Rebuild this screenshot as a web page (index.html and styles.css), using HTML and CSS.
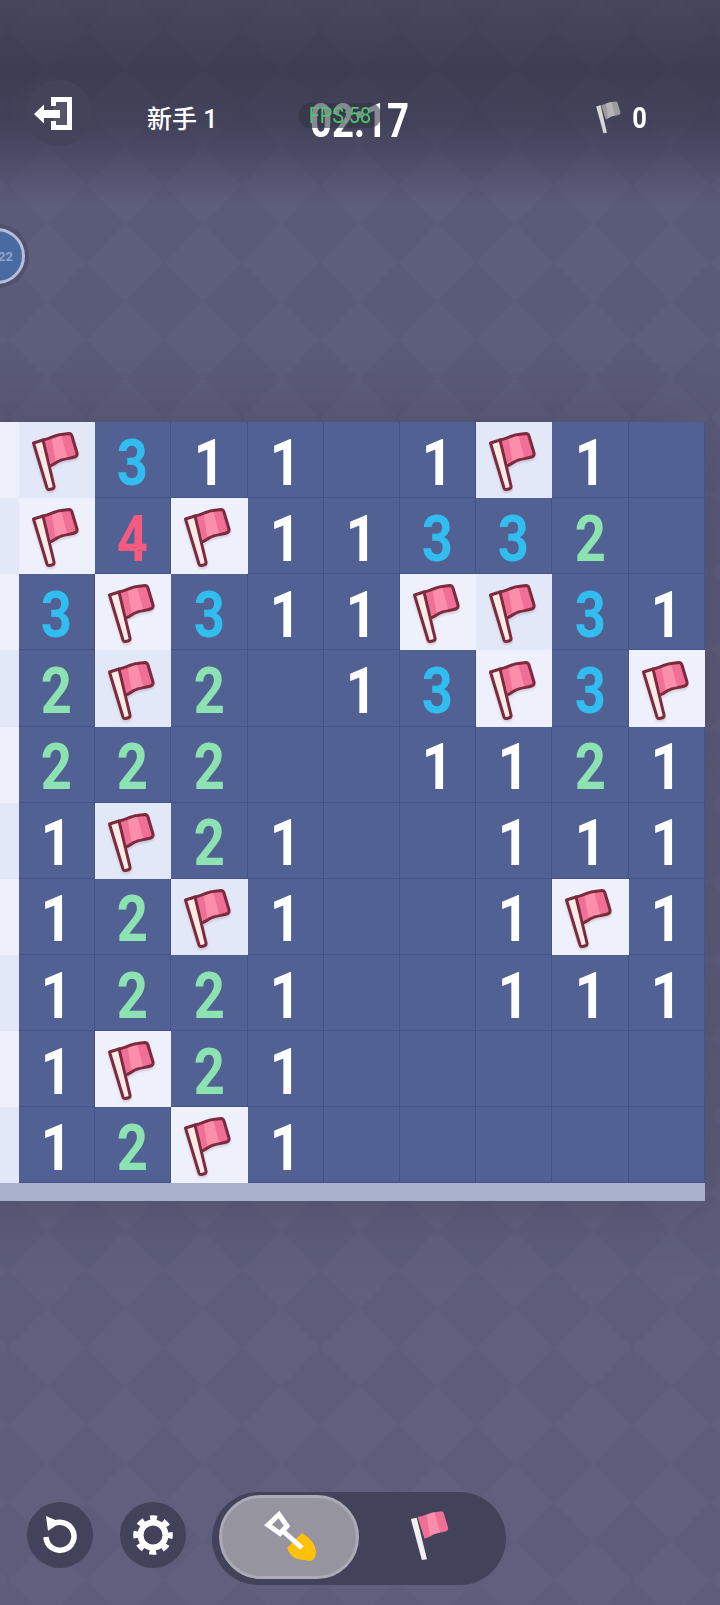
FILE: index.html
```html
<!DOCTYPE html>
<html lang="zh">
<head>
    <meta charset="UTF-8">
    <meta name="viewport" content="width=device-width, initial-scale=1.0">
    <title>扫雷</title>
    <link rel="stylesheet" href="styles.css">
</head>
<body>
    <svg class="defs" width="0" height="0">
        <symbol id="flag" viewBox="0 0 76 76">
            <path class="flag-cloth" d="M24 17 C30 16 36 12 42 11.5 L50 10.5 Q52 10.5 52.8 12.5 L58 30 Q58.5 33 55.5 34 C50 36 44 35.5 39 38.5 C36 40.5 34 42 32 42.5 Z"/>
            <path class="flag-band" d="M32.5 14.8 C35.5 13.6 38.5 12.2 42 11.5 L48.5 35.4 C45.5 36 42 36.8 39 38.5 C38.2 39 37.6 39.6 36.8 40.2 Z"/>
            <path class="flag-line" d="M24 17 C30 16 36 12 42 11.5 L50 10.5 Q52 10.5 52.8 12.5 L58 30 Q58.5 33 55.5 34 C50 36 44 35.5 39 38.5 C36 40.5 34 42 32 42.5"/>
            <path class="flag-pole" d="M14.5 20 L24 17 L35 63 Q35.5 65 33.5 65.8 L30.5 66.5 Q28.6 66.8 28 65 Z"/>
        </symbol>
    </svg>

    <div class="float-badge"><span>22</span></div>

    <header class="top-bar">
        <button class="round-btn">
            <svg width="38" height="33" viewBox="0 0 38 33">
                <rect x="19" y="3" width="16" height="27" fill="#fff" opacity="0.1"/>
                <path d="M19.5 9 V2.5 H35.5 V30.5 H19.5 V24" fill="none" stroke="#fff" stroke-width="5"/>
                <path d="M0 17 L10 7.5 V13 H26 V21 H10 V26.5 Z" fill="#fff"/>
            </svg>
        </button>
        <div class="level">新手 1</div>
        <div class="timer">
            <span class="timer-text">02:17</span>
            <div class="fps">FPS:58</div>
        </div>
        <div class="flag-count">
            <svg width="26" height="35" viewBox="13 10 46 58">
                <path d="M24 17 C30 16 36 12 42 11.5 L50 10.5 Q52 10.5 52.8 12.5 L58 30 Q58.5 33 55.5 34 C50 36 44 35.5 39 38.5 C36 40.5 34 42 32 42.5 Z" fill="#9c9c9c"/>
                <path d="M32.5 14.8 C35.5 13.6 38.5 12.2 42 11.5 L48.5 35.4 C45.5 36 42 36.8 39 38.5 L36.8 40.2 Z" fill="#b4b4b4"/>
                <path d="M15 19.5 L23 17.5 L34 66 L28 67 Z" fill="#d6d6d6"/>
            </svg>
            <span class="flag-num">0</span>
        </div>
    </header>

    <main class="board">
        <div class="cell open light"></div><div class="cell open dark"><svg><use href="#flag"/></svg></div><div class="cell n3"><b>3</b></div><div class="cell n1"><b>1</b></div><div class="cell n1"><b>1</b></div><div class="cell"></div><div class="cell n1"><b>1</b></div><div class="cell open dark"><svg><use href="#flag"/></svg></div><div class="cell n1"><b>1</b></div><div class="cell"></div>
        <div class="cell open dark"></div><div class="cell open light"><svg><use href="#flag"/></svg></div><div class="cell n4"><b>4</b></div><div class="cell open light"><svg><use href="#flag"/></svg></div><div class="cell n1"><b>1</b></div><div class="cell n1"><b>1</b></div><div class="cell n3"><b>3</b></div><div class="cell n3"><b>3</b></div><div class="cell n2"><b>2</b></div><div class="cell"></div>
        <div class="cell open light"></div><div class="cell n3"><b>3</b></div><div class="cell open light"><svg><use href="#flag"/></svg></div><div class="cell n3"><b>3</b></div><div class="cell n1"><b>1</b></div><div class="cell n1"><b>1</b></div><div class="cell open light"><svg><use href="#flag"/></svg></div><div class="cell open dark"><svg><use href="#flag"/></svg></div><div class="cell n3"><b>3</b></div><div class="cell n1"><b>1</b></div>
        <div class="cell open dark"></div><div class="cell n2"><b>2</b></div><div class="cell open dark"><svg><use href="#flag"/></svg></div><div class="cell n2"><b>2</b></div><div class="cell"></div><div class="cell n1"><b>1</b></div><div class="cell n3"><b>3</b></div><div class="cell open light"><svg><use href="#flag"/></svg></div><div class="cell n3"><b>3</b></div><div class="cell open light"><svg><use href="#flag"/></svg></div>
        <div class="cell open light"></div><div class="cell n2"><b>2</b></div><div class="cell n2"><b>2</b></div><div class="cell n2"><b>2</b></div><div class="cell"></div><div class="cell"></div><div class="cell n1"><b>1</b></div><div class="cell n1"><b>1</b></div><div class="cell n2"><b>2</b></div><div class="cell n1"><b>1</b></div>
        <div class="cell open dark"></div><div class="cell n1"><b>1</b></div><div class="cell open dark"><svg><use href="#flag"/></svg></div><div class="cell n2"><b>2</b></div><div class="cell n1"><b>1</b></div><div class="cell"></div><div class="cell"></div><div class="cell n1"><b>1</b></div><div class="cell n1"><b>1</b></div><div class="cell n1"><b>1</b></div>
        <div class="cell open light"></div><div class="cell n1"><b>1</b></div><div class="cell n2"><b>2</b></div><div class="cell open dark"><svg><use href="#flag"/></svg></div><div class="cell n1"><b>1</b></div><div class="cell"></div><div class="cell"></div><div class="cell n1"><b>1</b></div><div class="cell open light"><svg><use href="#flag"/></svg></div><div class="cell n1"><b>1</b></div>
        <div class="cell open dark"></div><div class="cell n1"><b>1</b></div><div class="cell n2"><b>2</b></div><div class="cell n2"><b>2</b></div><div class="cell n1"><b>1</b></div><div class="cell"></div><div class="cell"></div><div class="cell n1"><b>1</b></div><div class="cell n1"><b>1</b></div><div class="cell n1"><b>1</b></div>
        <div class="cell open light"></div><div class="cell n1"><b>1</b></div><div class="cell open light"><svg><use href="#flag"/></svg></div><div class="cell n2"><b>2</b></div><div class="cell n1"><b>1</b></div><div class="cell"></div><div class="cell"></div><div class="cell"></div><div class="cell"></div><div class="cell"></div>
        <div class="cell open dark"></div><div class="cell n1"><b>1</b></div><div class="cell n2"><b>2</b></div><div class="cell open light"><svg><use href="#flag"/></svg></div><div class="cell n1"><b>1</b></div><div class="cell"></div><div class="cell"></div><div class="cell"></div><div class="cell"></div><div class="cell"></div>
        <div class="board-edge"></div>
    </main>

    <footer class="tools">
        <button class="round-btn">
            <svg width="40" height="42" viewBox="0 0 40 42">
                <path d="M10 12.5 A14 14 0 1 1 6 23" fill="none" stroke="#fff" stroke-width="5.5"/>
                <path d="M6 2 L20 8 L8 17 Z" fill="#fff"/>
            </svg>
        </button>
        <button class="round-btn">
            <svg width="42" height="42" viewBox="0 0 42 42">
                <circle cx="21" cy="21" r="12.5" fill="none" stroke="#fff" stroke-width="6"/>
                <circle cx="21" cy="21" r="17" fill="none" stroke="#fff" stroke-width="5.5" stroke-dasharray="6.9 6.45" stroke-dashoffset="3.4"/>
            </svg>
        </button>
        <div class="mode-switch">
            <div class="mode mode-on">
                <svg width="60" height="70" viewBox="20 2 60 70">
                    <path d="M48 48 L63 33 Q76 41 77 51 Q77 60 71 61 L58 59 Q51 56 48 48 Z" fill="#ffc107"/>
                    <path d="M44 31 L63 48" stroke="#fff" stroke-width="5"/>
                    <path d="M29 25 L40 14.5 L48 26 L41 33.5 Z" fill="none" stroke="#fff" stroke-width="5" stroke-linejoin="miter"/>
                </svg>
            </div>
            <div class="mode">
                <svg width="39" height="51" viewBox="13 10 46 58">
                    <path d="M22 17 C30 16 36 12 42 11.5 L50 10.5 Q52 10.5 52.8 12.5 L58 30 Q58.5 33 55.5 34 C50 36 44 35.5 39 38.5 C36 40.5 34 42 30 42.5 Z" fill="#ef6f96"/>
                    <path d="M32.5 14.8 C35.5 13.6 38.5 12.2 42 11.5 L48.5 35.4 C45.5 36 42 36.8 39 38.5 L36.8 40.2 Z" fill="#fb8fab"/>
                    <path d="M14 19.5 L21 18 L33 67 L27 68 Z" fill="#f1eff2"/>
                </svg>
            </div>
        </div>
    </footer>
</body>
</html>
```

FILE: styles.css
```css
html, body {
    margin: 0;
    height: 1605px;
    overflow: hidden;
}

body {
    position: relative;
    font-family: Roboto, "Noto Sans CJK SC", sans-serif;
    color: white;
    background-color: #5f5f7e;
    /* diamond tile: four dark corners around a light centre */
    background-image:
        linear-gradient(45deg, rgba(30,30,60,0.045) 25%, transparent 25%),
        linear-gradient(-45deg, rgba(30,30,60,0.045) 25%, transparent 25%),
        linear-gradient(135deg, rgba(30,30,60,0.045) 25%, transparent 25%),
        linear-gradient(-135deg, rgba(30,30,60,0.045) 25%, transparent 25%),
        linear-gradient(#47475d 0, #3e3e54 70px, #42425a 120px, #5d5d7c 205px, #60607e 1605px);
    background-size: 78px 77.5px, 78px 77.5px, 78px 77.5px, 78px 77.5px, 100% 100%;
    background-position: 8px 68.75px, 8px 68.75px, 8px 68.75px, 8px 68.75px, 0 0;
    background-repeat: repeat, repeat, repeat, repeat, no-repeat;
}

.defs {
    position: absolute;
}

button {
    border: none;
    padding: 0;
    cursor: pointer;
}

.round-btn {
    width: 66px;
    height: 66px;
    border-radius: 50%;
    background-color: #42425a;
    display: flex;
    align-items: center;
    justify-content: center;
    flex-shrink: 0;
}

/* top bar */
.top-bar {
    display: flex;
    align-items: center;
    height: 66px;
    padding: 80px 0 0 26px;
}

.top-bar .round-btn {
    background-color: #434359;
    padding-right: 13px;
    box-sizing: border-box;
}

.level {
    width: 165px;
    margin: 8px 0 0 55px;
    font-size: 25px;
    font-weight: 500;
    white-space: nowrap;
}

.timer {
    position: relative;
    width: 120px;
    height: 66px;
    margin-left: -1px;
}

.timer-text {
    display: block;
    margin: 13px 0 0 -1px;
    font-size: 48px;
    font-weight: 700;
    line-height: 56px;
    transform: scaleX(0.8);
    transform-origin: left center;
    white-space: nowrap;
}

.fps {
    position: absolute;
    left: -17px;
    top: 23px;
    width: 92px;
    height: 25px;
    border-radius: 13px;
    background-color: rgba(52,52,70,0.58);
    color: #4fc66c;
    font-size: 22px;
    line-height: 25px;
    text-align: center;
    transform: scaleX(0.9);
}

.flag-count {
    display: flex;
    align-items: center;
    margin: 8px 0 0 164px;
}

.flag-num {
    margin-left: 10px;
    font-size: 30px;
    font-weight: 700;
    transform: scaleX(0.85);
}

/* board */
.board {
    display: grid;
    grid-template-columns: repeat(10, 76.2px);
    grid-template-rows: repeat(10, 76.15px) auto;
    width: 762px;
    margin: 276px 0 0 -57.2px;
    box-shadow: 0 0 70px rgba(30,30,50,0.25);
}

.cell {
    display: flex;
    align-items: center;
    justify-content: center;
    box-sizing: border-box;
    background-color: #526193;
    border-right: 1px solid #44528c;
    border-bottom: 1px solid #44528c;
}

.cell b {
    padding-top: 8px;
    font-size: 64px;
    font-weight: 700;
    line-height: 70px;
    transform: scaleX(0.85);
}

.cell svg {
    width: 76px;
    height: 76px;
    margin-top: 2px;
    filter: drop-shadow(0 2px 1px rgba(120,90,110,0.25));
}

.open {
    border: none;
}

.light {
    background-color: #eef1fb;
}

.dark {
    background-color: #e2e8f8;
}

.n1 { color: #ffffff; }
.n2 { color: #8de2b2; }
.n3 { color: #31bdf0; }
.n4 { color: #f55a80; }

.flag-cloth { fill: #ef6f96; }
.flag-band { fill: #fb8fab; }
.flag-line { fill: none; stroke: #7c2b3e; stroke-width: 3; stroke-linejoin: round; stroke-linecap: round; }
.flag-pole { fill: #fbeae6; stroke: #7c2b3e; stroke-width: 3; stroke-linejoin: round; }

.board-edge {
    grid-column: 1 / -1;
    height: 17.5px;
    background-color: #a9b0cc;
}

/* bottom tools */
.tools {
    display: flex;
    align-items: flex-start;
    gap: 27px;
    margin-top: 291px;
    padding-left: 27px;
}

.tools .round-btn {
    margin-top: 10px;
}

.mode-switch {
    display: flex;
    width: 294px;
    height: 93px;
    box-sizing: border-box;
    padding: 3px 0 0 7px;
    margin-left: -1px;
    border-radius: 47px;
    background-color: #42425a;
}

.mode {
    display: flex;
    align-items: center;
    justify-content: center;
    width: 140px;
    height: 84px;
    box-sizing: border-box;
    border-radius: 42px;
}

.mode-on {
    background-color: #96949f;
    border: 3px solid #abaab6;
}

.mode:last-child {
    width: 98px;
    margin-left: 21px;
    margin-top: -1px;
}

/* round thing stuck on the left edge */
.float-badge {
    position: absolute;
    left: -31px;
    top: 228px;
    width: 50px;
    height: 50px;
    border: 3px solid #b7bedb;
    border-radius: 50%;
    background-color: #4a6aa2;
    box-shadow: 0 0 0 4px #50506c;
    display: flex;
    align-items: center;
    justify-content: flex-end;
    color: #8fa3c8;
    font-size: 13px;
    font-weight: 700;
}

.float-badge span {
    margin-right: 9px;
}
```
